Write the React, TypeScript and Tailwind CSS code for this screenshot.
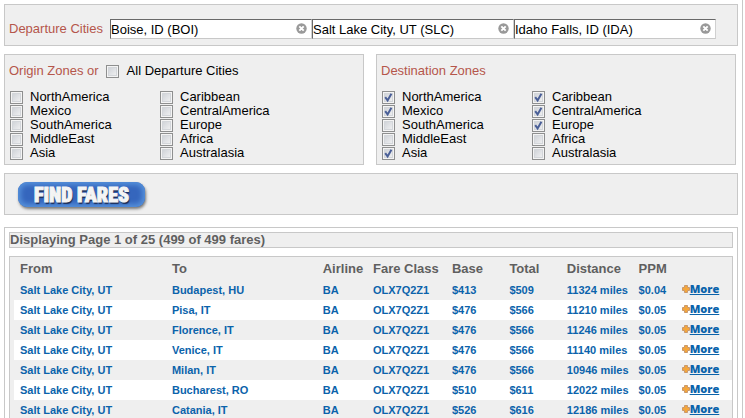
import React, { useState } from 'react';

const ZONES = [
  'NorthAmerica', 'Caribbean',
  'Mexico', 'CentralAmerica',
  'SouthAmerica', 'Europe',
  'MiddleEast', 'Africa',
  'Asia', 'Australasia',
];

const DEFAULT_DESTINATIONS = ['NorthAmerica', 'Caribbean', 'Mexico', 'CentralAmerica', 'Europe', 'Asia'];

const DEFAULT_CITIES = ['Boise, ID (BOI)', 'Salt Lake City, UT (SLC)', 'Idaho Falls, ID (IDA)'];

interface Fare {
  to: string;
  base: number;
  total: number;
  miles: number;
  ppm: string;
}

const FARES: Fare[] = [
  { to: 'Budapest, HU', base: 413, total: 509, miles: 11324, ppm: '$0.04' },
  { to: 'Pisa, IT', base: 476, total: 566, miles: 11210, ppm: '$0.05' },
  { to: 'Florence, IT', base: 476, total: 566, miles: 11246, ppm: '$0.05' },
  { to: 'Venice, IT', base: 476, total: 566, miles: 11140, ppm: '$0.05' },
  { to: 'Milan, IT', base: 476, total: 566, miles: 10946, ppm: '$0.05' },
  { to: 'Bucharest, RO', base: 510, total: 611, miles: 12022, ppm: '$0.05' },
  { to: 'Catania, IT', base: 526, total: 616, miles: 12186, ppm: '$0.05' },
];

interface CheckboxProps {
  id: string;
  checked: boolean;
  onChange: () => void;
}

// Native input with the old Windows look, the tick is drawn on top
const Checkbox: React.FC<CheckboxProps> = ({ id, checked, onChange }) => (
  <span className="relative block size-[13px] shrink-0">
    <input
      id={id}
      type="checkbox"
      checked={checked}
      onChange={onChange}
      className="block size-[13px] appearance-none border border-[#8e8f8f] bg-linear-to-br from-[#c9cdd3] to-[#f6f6f6] shadow-[inset_0_0_0_1px_#f4f4f4,inset_0_0_0_2px_#d3d6da]"
    />
    {checked && (
      <svg viewBox="0 0 13 13" className="pointer-events-none absolute inset-0 size-[13px]">
        <path d="M3.2 6.2 L5.6 9.4 L9.4 2.8" fill="none" stroke="#4a5f97" strokeWidth="2" />
      </svg>
    )}
  </span>
);

interface ZoneGridProps {
  prefix: string;
  selected: string[];
  onToggle: (zone: string) => void;
}

const ZoneGrid: React.FC<ZoneGridProps> = ({ prefix, selected, onToggle }) => (
  <div className="grid grid-cols-[150px_1fr] pl-[5px]">
    {ZONES.map((zone) => (
      <div key={zone} className="flex h-[14px] items-center gap-[7px]">
        <Checkbox id={`${prefix}-${zone}`} checked={selected.includes(zone)} onChange={() => onToggle(zone)} />
        <label htmlFor={`${prefix}-${zone}`} className="leading-[14px] text-black">
          {zone}
        </label>
      </div>
    ))}
  </div>
);

const toggle = (list: string[], value: string) =>
  list.includes(value) ? list.filter((item) => item !== value) : [...list, value];

const App: React.FC = () => {
  const [cities, setCities] = useState(DEFAULT_CITIES);
  const [allCities, setAllCities] = useState(false);
  const [origins, setOrigins] = useState<string[]>([]);
  const [destinations, setDestinations] = useState(DEFAULT_DESTINATIONS);

  const setCity = (index: number, value: string) => {
    setCities(cities.map((city, i) => (i === index ? value : city)));
  };

  return (
    <main className="mr-[2px] h-screen overflow-hidden border-r border-[#c8c8c8] bg-white p-1 font-['Liberation_Sans',Arial,sans-serif] text-[13px]">
      {/* Departure cities */}
      <section className="flex h-[42px] items-center border border-[#c8c8c8] bg-[#efefef] pt-2 pl-1">
        <span className="w-[101px] shrink-0 whitespace-nowrap text-[#b5564b]">Departure Cities</span>
        {cities.map((city, index) => (
          <div key={index} className="relative w-[202px]">
            <input
              type="text"
              aria-label={`Departure city ${index + 1}`}
              value={city}
              onChange={(e) => setCity(index, e.target.value)}
              className="block h-5 w-full border border-t-[#696969] border-r-[#d0d0d0] border-b-[#c8c8c8] border-l-[#696969] bg-white pr-5 text-black"
            />
            <button
              type="button"
              aria-label="Clear city"
              onClick={() => setCity(index, '')}
              className="absolute top-1 right-[5px] size-[11px]"
            >
              <svg viewBox="0 0 11 11" className="block size-[11px]">
                <circle cx="5.5" cy="5.5" r="5.2" fill="#999" />
                <path d="M3.3 3.3 L7.7 7.7 M7.7 3.3 L3.3 7.7" stroke="#fff" strokeWidth="1.9" />
              </svg>
            </button>
          </div>
        ))}
      </section>

      {/* Zones */}
      <div className="mt-2 mr-[2px] flex gap-3">
        <fieldset className="h-[111px] flex-1 border border-[#c8c8c8] bg-[#efefef]">
          <div className="mb-[3px] flex h-8 items-center pl-1">
            <span className="text-[#b5564b]">Origin Zones or</span>
            <span className="pl-[7px]">
              <Checkbox id="all-cities" checked={allCities} onChange={() => setAllCities(!allCities)} />
            </span>
            <label htmlFor="all-cities" className="pl-2 text-black">All Departure Cities</label>
          </div>
          <ZoneGrid prefix="origin" selected={origins} onToggle={(zone) => setOrigins(toggle(origins, zone))} />
        </fieldset>
        <fieldset className="h-[111px] flex-1 border border-[#c8c8c8] bg-[#efefef]">
          <div className="mb-[3px] flex h-8 items-center pl-1 text-[#b5564b]">Destination Zones</div>
          <ZoneGrid
            prefix="destination"
            selected={destinations}
            onToggle={(zone) => setDestinations(toggle(destinations, zone))}
          />
        </fieldset>
      </div>

      {/* Search */}
      <section className="mt-2 flex h-[42px] items-center border border-[#c8c8c8] bg-[#efefef] pl-[13px]">
        <button
          type="button"
          className="flex h-[25px] w-[127px] items-center justify-center rounded-[9px] bg-[#3566bd] pt-px font-['Roboto_Condensed','Liberation_Sans',sans-serif] text-xl leading-none font-black text-[#f4f4f4] shadow-[inset_0_0_5px_3px_#5590da,1px_2px_3px_#777] [-webkit-text-stroke:1px_#f4f4f4] text-shadow-[1px_2px_1px_#1c2c55]"
        >
          FIND FARES
        </button>
      </section>

      {/* Results */}
      <section className="mt-3 border border-[#c8c8c8] p-1">
        <h2 className="h-4 border border-[#c8c8c8] bg-[#efefef] leading-[14px] font-bold text-[#5f5f5f]">
          Displaying Page 1 of 25 (499 of 499 fares)
        </h2>
        <div className="mt-2 border border-[#c8c8c8] bg-[#efefef] pl-1">
          <table className="w-full table-fixed text-left text-[11px] font-bold text-[#0b63ab]">
            <thead className="text-[13px] text-[#5f5f5f]">
              <tr className="h-[23px]">
                <th className="w-[22%] pl-[6px]">From</th>
                <th className="w-[21%]">To</th>
                <th className="w-[7%]">Airline</th>
                <th className="w-[11%]">Fare Class</th>
                <th className="w-[8%]">Base</th>
                <th className="w-[8%]">Total</th>
                <th className="w-[10%]">Distance</th>
                <th className="w-[6%]">PPM</th>
                <th className="w-[7%]"></th>
              </tr>
            </thead>
            <tbody>
              {FARES.map((fare) => (
                <tr key={fare.to} className="h-5 leading-[18px] whitespace-nowrap even:bg-white">
                  <td className="pl-[6px]">Salt Lake City, UT</td>
                  <td>{fare.to}</td>
                  <td>BA</td>
                  <td>OLX7Q2Z1</td>
                  <td>${fare.base}</td>
                  <td>${fare.total}</td>
                  <td>{fare.miles} miles</td>
                  <td>{fare.ppm}</td>
                  <td className="pb-[3px]">
                    <a href="#more" className="flex items-center font-['Open_Sans',sans-serif] text-[11px] leading-none font-extrabold">
                      <svg viewBox="0 0 8 8" className="mt-px size-2">
                        <path d="M2.5 .5h3v2h2v3h-2v2h-3v-2h-2v-3h2z" fill="#f5a63a" stroke="#c9986a" strokeWidth="1" />
                      </svg>
                      <span className="underline">More</span>
                    </a>
                  </td>
                </tr>
              ))}
            </tbody>
          </table>
        </div>
      </section>
    </main>
  );
};

export default App;
